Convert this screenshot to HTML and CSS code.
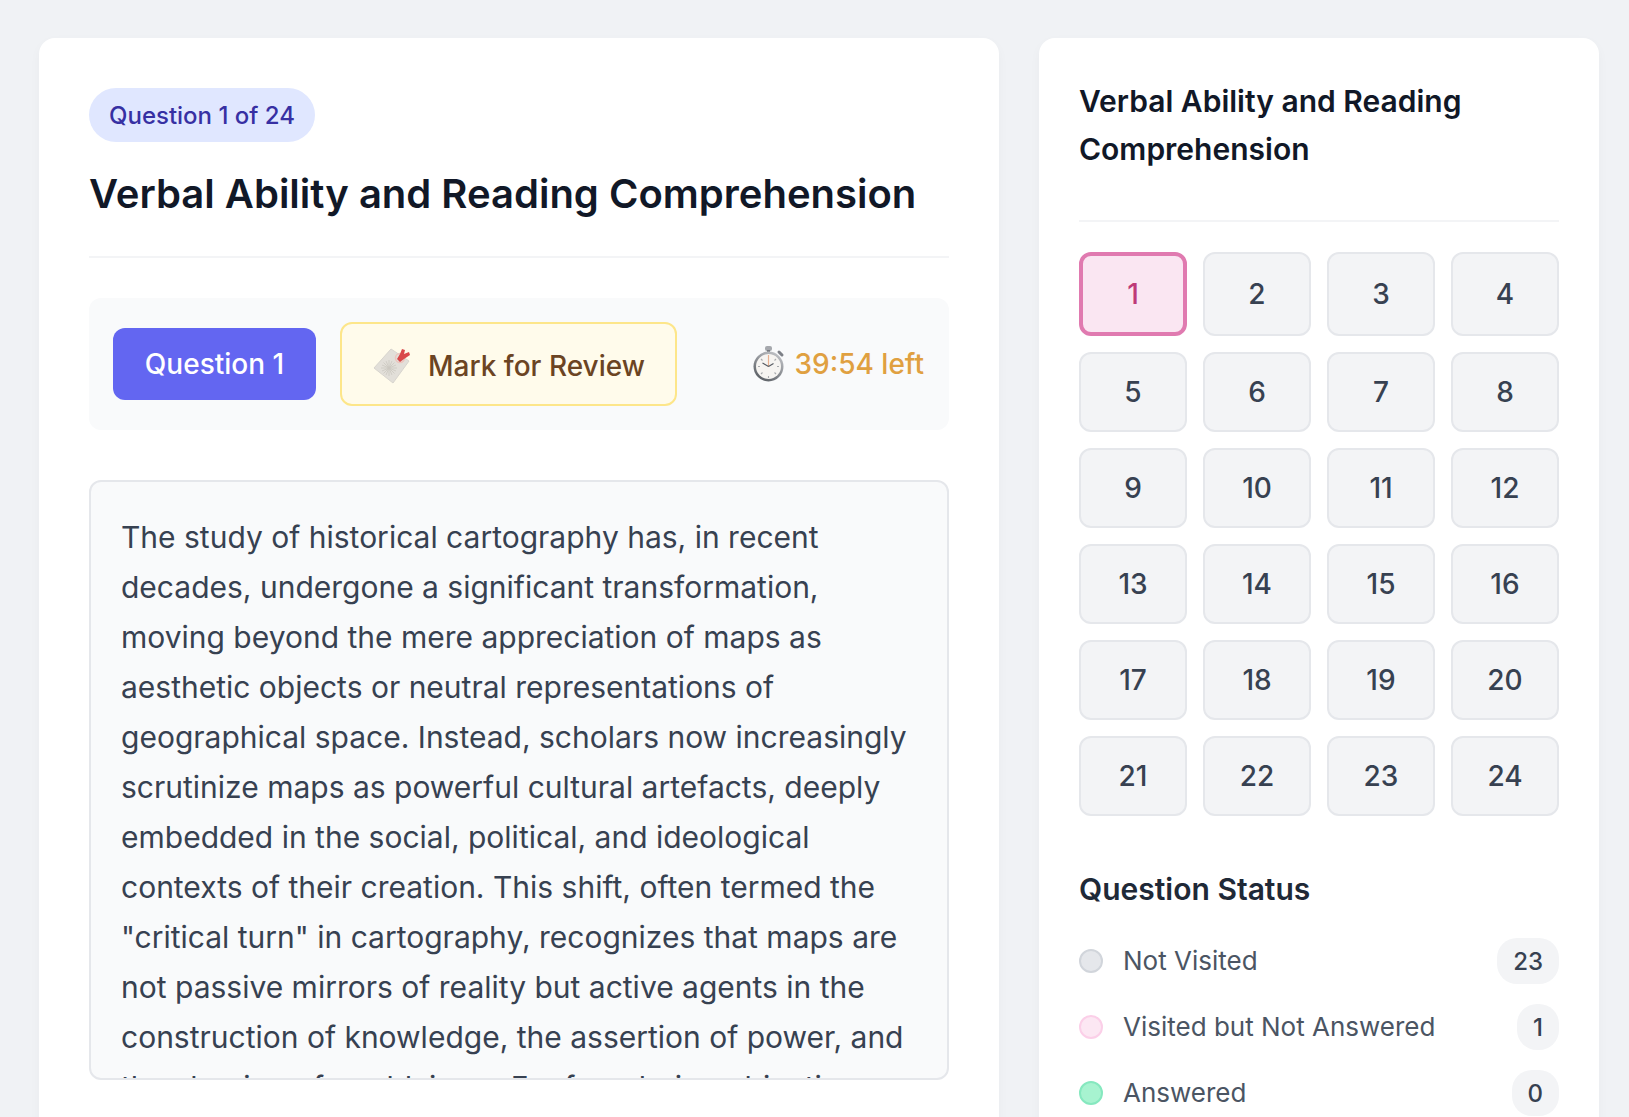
FILE: index.html
```html
<!DOCTYPE html>
<html lang="en">
<head>
  <meta charset="UTF-8" />
  <meta name="viewport" content="width=device-width, initial-scale=1.0" />
  <title>Verbal Ability and Reading Comprehension</title>
  <link rel="stylesheet" href="styles.css">
</head>
<body>
  <div class="layout">
    <main class="card question-card">
      <span class="counter-pill">Question 1 of 24</span>
      <h1>Verbal Ability and Reading Comprehension</h1>
      <div class="question-bar">
        <div class="bar-left">
          <button type="button" class="question-btn">Question 1</button>
          <button type="button" class="review-btn">
            <svg class="tag-icon" viewBox="0 0 40 40" aria-hidden="true">
              <path d="M18 3 L36 15 L20 37 L1 22 Z" fill="#e2dfd9" stroke="#d8d5ce" stroke-width="1" stroke-linejoin="round"/>
              <g stroke="#cbc8c0" stroke-width="0.8">
                <path d="M16 14 V30 M8 22 H24 M10.5 16.5 L21.5 27.5 M21.5 16.5 L10.5 27.5 M13 15 L19 29 M19 15 L13 29 M9 19 L23 25 M9 25 L23 19"/>
              </g>
              <circle cx="27" cy="12" r="4.5" fill="none" stroke="#ecc4bd" stroke-width="1.5"/>
              <path d="M24 13 L27 8 L29 3 L32 4 L31 8 L36 6 L37 9 L31 13 L27 16 Z" fill="#d9484a"/>
            </svg>
            Mark for Review
          </button>
        </div>
        <div class="timer">
          <svg class="watch-icon" viewBox="0 0 32 36" aria-hidden="true">
            <defs>
              <linearGradient id="watchRim" x1="0.8" y1="0" x2="0.2" y2="1">
                <stop offset="0" stop-color="#c4c6ca"/>
                <stop offset="1" stop-color="#55595f"/>
              </linearGradient>
            </defs>
            <rect x="12" y="0" width="7" height="5" rx="2" fill="#a6a8ad"/>
            <rect x="14" y="4" width="3" height="3" fill="#75787e"/>
            <path d="M26 6 L29 9" stroke="#7d8087" stroke-width="3" stroke-linecap="round"/>
            <circle cx="15.5" cy="20.5" r="15" fill="url(#watchRim)"/>
            <circle cx="15.5" cy="20.5" r="12.5" fill="#f6f4f1"/>
            <g stroke="#a9abae" stroke-width="1.1">
              <path d="M15.5 30 V32 M5 20.5 H7 M24 20.5 H26 M8 13 L9.5 14.5 M21.5 26.5 L23 28 M23 13 L21.5 14.5 M8 28 L9.5 26.5"/>
            </g>
            <path d="M15.5 9 V20.5" stroke="#e8b090" stroke-width="1.2"/>
            <path d="M15.5 20.5 L9.5 17 M15.5 20.5 L20.5 17.5" stroke="#555a61" stroke-width="1.1"/>
          </svg>
          <span>39:54 left</span>
        </div>
      </div>
      <div class="passage">
        <p>The study of historical cartography has, in recent decades, undergone a significant transformation, moving beyond the mere appreciation of maps as aesthetic objects or neutral representations of geographical space. Instead, scholars now increasingly scrutinize maps as powerful cultural artefacts, deeply embedded in the social, political, and ideological contexts of their creation. This shift, often termed the "critical turn" in cartography, recognizes that maps are not passive mirrors of reality but active agents in the construction of knowledge, the assertion of power, and the shaping of worldviews. Far from being objective</p>
      </div>
    </main>

    <aside class="card side-card">
      <h2>Verbal Ability and Reading Comprehension</h2>
      <div class="question-grid">
        <button type="button" class="grid-btn active">1</button>
        <button type="button" class="grid-btn">2</button>
        <button type="button" class="grid-btn">3</button>
        <button type="button" class="grid-btn">4</button>
        <button type="button" class="grid-btn">5</button>
        <button type="button" class="grid-btn">6</button>
        <button type="button" class="grid-btn">7</button>
        <button type="button" class="grid-btn">8</button>
        <button type="button" class="grid-btn">9</button>
        <button type="button" class="grid-btn">10</button>
        <button type="button" class="grid-btn">11</button>
        <button type="button" class="grid-btn">12</button>
        <button type="button" class="grid-btn">13</button>
        <button type="button" class="grid-btn">14</button>
        <button type="button" class="grid-btn">15</button>
        <button type="button" class="grid-btn">16</button>
        <button type="button" class="grid-btn">17</button>
        <button type="button" class="grid-btn">18</button>
        <button type="button" class="grid-btn">19</button>
        <button type="button" class="grid-btn">20</button>
        <button type="button" class="grid-btn">21</button>
        <button type="button" class="grid-btn">22</button>
        <button type="button" class="grid-btn">23</button>
        <button type="button" class="grid-btn">24</button>
      </div>
      <h3>Question Status</h3>
      <ul class="status-list">
        <li class="status-row">
          <span class="dot dot-grey"></span>
          <span class="status-label">Not Visited</span>
          <span class="status-count">23</span>
        </li>
        <li class="status-row">
          <span class="dot dot-pink"></span>
          <span class="status-label">Visited but Not Answered</span>
          <span class="status-count">1</span>
        </li>
        <li class="status-row">
          <span class="dot dot-green"></span>
          <span class="status-label">Answered</span>
          <span class="status-count">0</span>
        </li>
      </ul>
    </aside>
  </div>
</body>
</html>
```

FILE: styles.css
```css
* {
  box-sizing: border-box;
}

html,
body {
  height: 100%;
}

body {
  margin: 0;
  overflow: hidden;
  background-color: #f0f2f5;
  font-family: Inter, "Liberation Sans", sans-serif;
  color: #374151;
}

button {
  font-family: inherit;
}

.layout {
  display: flex;
  align-items: flex-start;
  gap: 40px;
  height: 100%;
  overflow: hidden;
  padding: 38px 30px 0 39px;
}

.card {
  background: white;
  border-radius: 16px;
  box-shadow: 0 4px 12px rgba(0, 0, 0, 0.03);
  height: 1200px;
}

/* Left column */
.question-card {
  width: 960px;
  flex-shrink: 0;
  padding: 50px;
}

.counter-pill {
  display: inline-block;
  padding: 13px 20px 11px;
  border-radius: 27px;
  background-color: #e0e7ff;
  color: #3730a3;
  font-size: 24px;
  line-height: 30px;
  font-weight: 500;
}

h1 {
  margin: 27px 0 0;
  padding-bottom: 37px;
  border-bottom: 2px solid #f3f4f6;
  color: #111827;
  font-size: 40px;
  line-height: 50px;
  font-weight: 600;
}

.question-bar {
  display: flex;
  align-items: center;
  justify-content: space-between;
  height: 132px;
  margin-top: 40px;
  padding: 0 25px 0 24px;
  background-color: #f9fafb;
  border-radius: 12px;
}

.bar-left {
  display: flex;
  align-items: center;
  gap: 24px;
}

.question-btn {
  width: 203px;
  height: 72px;
  border: none;
  border-radius: 12px;
  background-color: #6366f1;
  color: white;
  font-size: 28px;
  font-weight: 500;
}

.review-btn {
  display: flex;
  align-items: center;
  gap: 15px;
  width: 337px;
  height: 84px;
  padding: 4px 31px 0;
  border: 2px solid #fde68a;
  border-radius: 12px;
  background-color: #fffbeb;
  color: #6b4423;
  font-size: 28px;
  font-weight: 500;
  white-space: nowrap;
}

.tag-icon {
  width: 40px;
  height: 40px;
  flex-shrink: 0;
}

.timer {
  display: flex;
  align-items: center;
  gap: 10px;
  color: #e0a040;
  font-size: 28px;
  font-weight: 500;
}

.watch-icon {
  width: 32px;
  height: 36px;
}

.passage {
  height: 600px;
  margin-top: 50px;
  padding: 30px 30px 0;
  overflow: hidden;
  border: 2px solid #e5e7eb;
  border-radius: 12px;
  background-color: #f9fafb;
}

.passage p {
  margin: 0;
  font-size: 30px;
  line-height: 50px;
}

/* Right column */
.side-card {
  width: 560px;
  flex-shrink: 0;
  padding: 39px 40px;
}

h2 {
  margin: 0;
  padding-bottom: 47px;
  border-bottom: 2px solid #f3f4f6;
  color: #111827;
  font-size: 30px;
  line-height: 48px;
  font-weight: 600;
}

.question-grid {
  display: grid;
  grid-template-columns: repeat(4, 1fr);
  gap: 16px;
  margin-top: 30px;
}

.grid-btn {
  min-height: 80px;
  border: 2px solid #e5e7eb;
  border-radius: 12px;
  background-color: #f3f4f6;
  color: #374151;
  font-size: 28px;
  font-weight: 500;
}

.grid-btn.active {
  min-height: 84px;
  border: 4px solid #e07ab0;
  background-color: #fae6f2;
  color: #be3a78;
}

h3 {
  margin: 49px 0 0;
  color: #1f2937;
  font-size: 30px;
  line-height: 48px;
  font-weight: 600;
}

.status-list {
  margin: 0;
  padding: 5px 0 0;
  list-style: none;
}

.status-row {
  display: flex;
  align-items: center;
  height: 46px;
  margin-top: 20px;
}

.dot {
  width: 24px;
  height: 24px;
  border-radius: 50%;
  border: 2px solid;
  margin-right: 20px;
  flex-shrink: 0;
}

.dot-grey {
  background-color: #e5e7eb;
  border-color: #d1d5db;
}

.dot-pink {
  background-color: #fce7f3;
  border-color: #fbcfe8;
}

.dot-green {
  background-color: #a7f3d0;
  border-color: #86e8bf;
}

.status-label {
  flex: 1;
  padding-bottom: 2px;
  color: #4b5563;
  font-size: 26px;
}

.status-count {
  padding: 1px 16px 0;
  height: 46px;
  border-radius: 20px;
  background-color: #f3f4f6;
  color: #374151;
  font-size: 24px;
  font-weight: 500;
  line-height: 46px;
  text-align: center;
}
```
